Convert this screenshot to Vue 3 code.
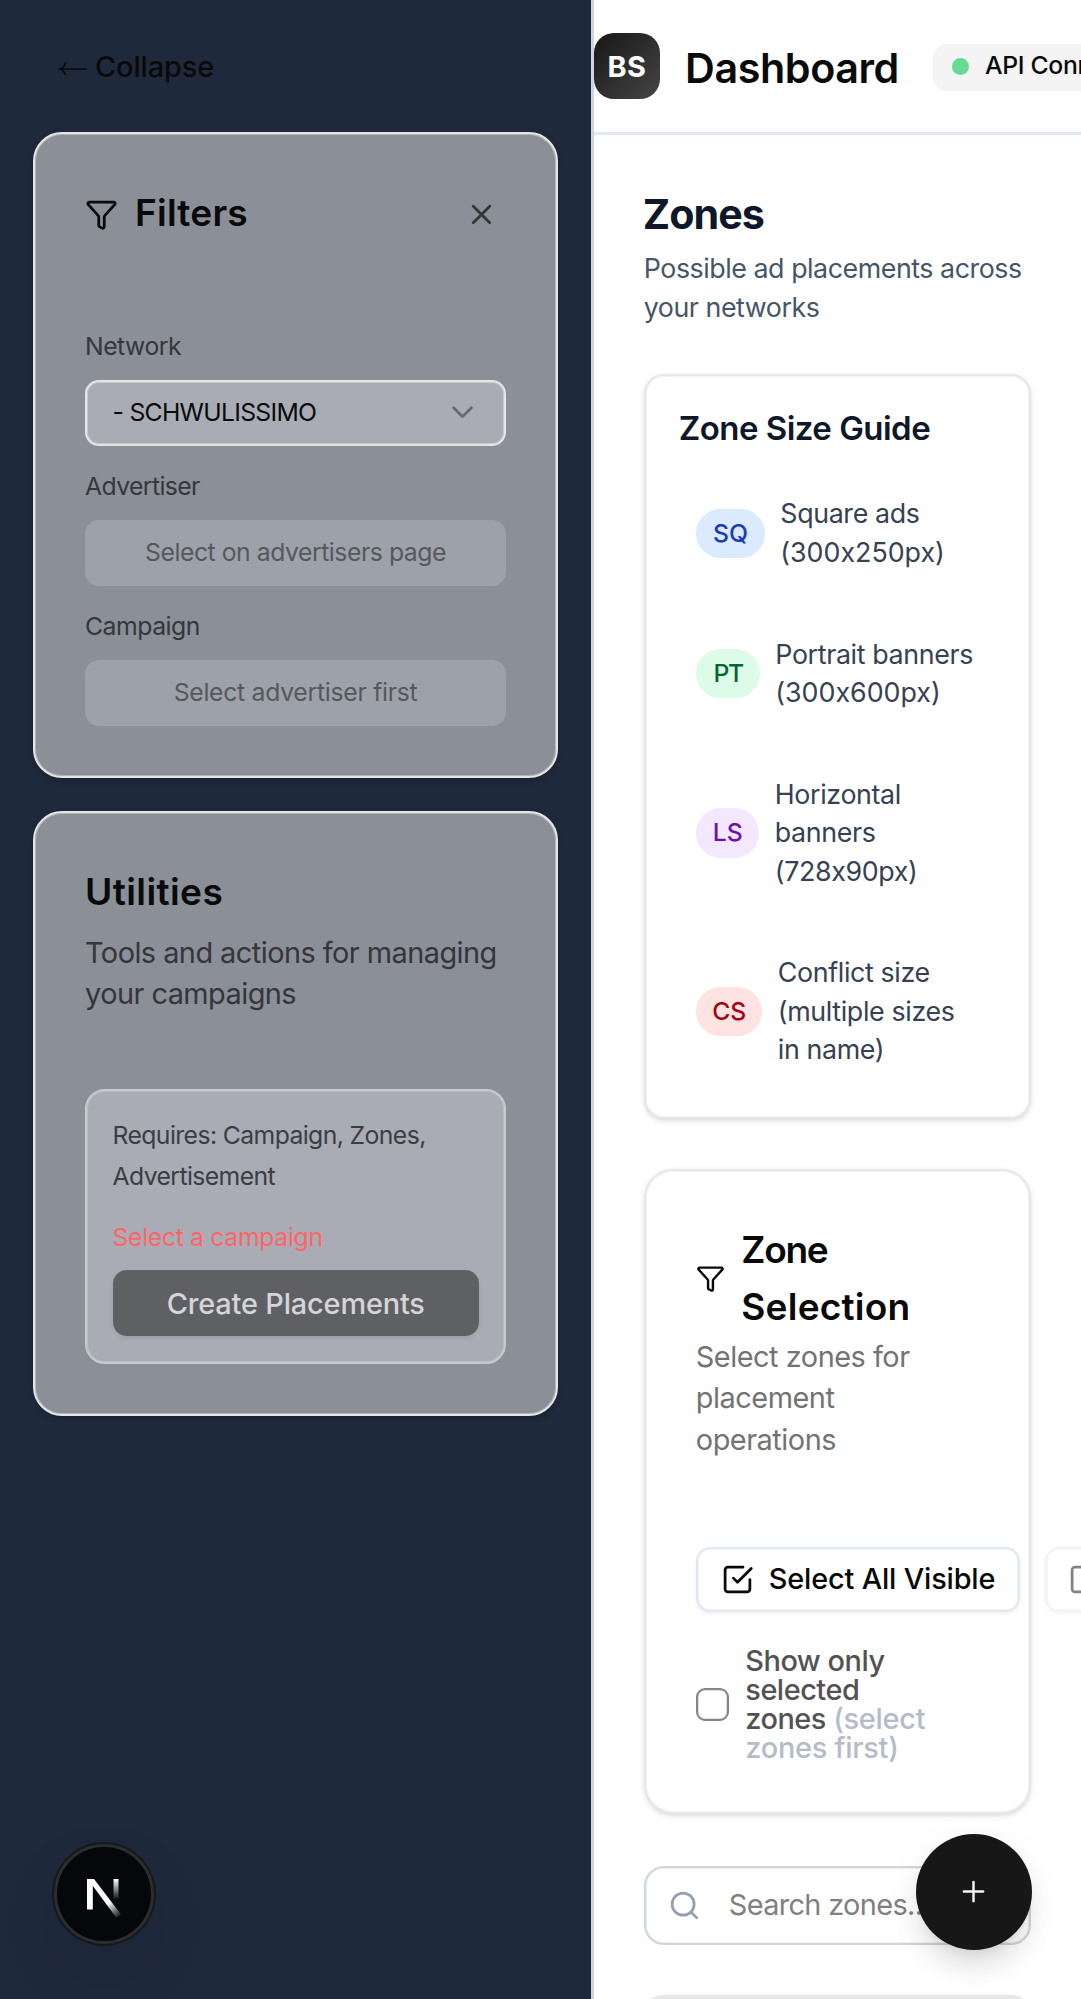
<script setup>
const sizes = [
  { code: 'SQ', tone: 'blue', width: 68.5, lines: ['Square ads', '(300x250px)'] },
  { code: 'PT', tone: 'green', width: 63.5, lines: ['Portrait banners', '(300x600px)'] },
  { code: 'LS', tone: 'purple', width: 63, lines: ['Horizontal', 'banners', '(728x90px)'] },
  { code: 'CS', tone: 'red', width: 66, lines: ['Conflict size', '(multiple sizes', 'in name)'] }
]
</script>

<template>
  <div class="app">
    <aside class="sidebar">
      <button class="collapse">
        <svg width="30" height="14" viewBox="0 0 30 14" fill="none" stroke="currentColor" stroke-width="1.7"><path d="M28 7H1.5M7.500 1.200C6.500 4 4.500 6.400 1.500 7c3 .6 5 3 6 5.800" /></svg>
        <span>Collapse</span>
      </button>

      <section class="panel filters">
        <div class="panel-head">
          <svg class="funnel" width="33" height="33" viewBox="0 0 24 24"><path d="M10 20a1 1 0 0 0 .553.895l2 1A1 1 0 0 0 14 21v-7a2 2 0 0 1 .517-1.341L21.740 4.670A1 1 0 0 0 21 3H3a1 1 0 0 0-.742 1.670l7.225 7.989A2 2 0 0 1 10 14z" /></svg>
          <h2>Filters</h2>
          <svg class="close" width="33" height="33" viewBox="0 0 24 24"><path d="M18 6 6 18M6 6l12 12" /></svg>
        </div>
        <label class="flabel">Network</label>
        <div class="select">
          <span>- SCHWULISSIMO</span>
          <svg width="33" height="33" viewBox="0 0 24 24"><path d="m5.500 8.500 6.500 6.500 6.500-6.500" /></svg>
        </div>
        <label class="flabel adv">Advertiser</label>
        <div class="field">Select on advertisers page</div>
        <label class="flabel">Campaign</label>
        <div class="field late">Select advertiser first</div>
      </section>

      <section class="panel utilities">
        <h2>Utilities</h2>
        <p class="lead">Tools and actions for managing<br />your campaigns</p>
        <div class="tool">
          <p class="req">Requires: Campaign, Zones,<br />Advertisement</p>
          <p class="warn">Select a campaign</p>
          <button class="create">Create Placements</button>
        </div>
      </section>

      <div class="devtools">
        <svg width="104" height="104" viewBox="0 0 104 104">
          <defs>
            <linearGradient id="stem" x1="0" y1="37" x2="0" y2="58" gradientUnits="userSpaceOnUse"><stop offset="0" stop-color="#fff" /><stop offset="1" stop-color="#fff" stop-opacity="0" /></linearGradient>
            <linearGradient id="diag" x1="56" y1="61" x2="67" y2="76" gradientUnits="userSpaceOnUse"><stop offset="0" stop-color="#fff" /><stop offset="1" stop-color="#fff" stop-opacity="0" /></linearGradient>
          </defs>
          <circle cx="52" cy="52" r="52" fill="#17181a" />
          <circle cx="52" cy="52" r="48.500" fill="#05070a" stroke="#2b2d30" stroke-width="3" />
          <path d="M35 37h5.800v30.500H35z" fill="#fff" />
          <path d="M61.500 37h5v21h-5z" fill="url(#stem)" />
          <path d="M35 37h7l27 35.500-4.500 3.500L38 40z" fill="url(#diag)" />
        </svg>
      </div>
    </aside>

    <main class="main">
      <header class="topbar">
        <div class="logo">BS</div>
        <h1>Dashboard</h1>
        <div class="status"><i></i><span>API Connected</span></div>
      </header>

      <div class="content">
        <h2 class="title">Zones</h2>
        <p class="subtitle">Possible ad placements across<br />your networks</p>

        <section class="card guide">
          <h3>Zone Size Guide</h3>
          <div class="rows">
            <div v-for="s in sizes" :key="s.code" class="row">
              <span class="pill" :class="s.tone" :style="{ width: s.width + 'px' }">{{ s.code }}</span>
              <div class="desc"><div v-for="l in s.lines" :key="l" :class="{ dims: l.startsWith('(300') }">{{ l }}</div></div>
            </div>
          </div>
        </section>

        <section class="card selection">
          <div class="sel-head">
            <svg class="funnel" width="29" height="29" viewBox="0 0 24 24"><path d="M10 20a1 1 0 0 0 .553.895l2 1A1 1 0 0 0 14 21v-7a2 2 0 0 1 .517-1.341L21.740 4.670A1 1 0 0 0 21 3H3a1 1 0 0 0-.742 1.670l7.225 7.989A2 2 0 0 1 10 14z" /></svg>
            <h3><span class="zone">Zone</span><br />Selection</h3>
          </div>
          <p class="sel-text">Select zones for<br />placement<br />operations</p>
          <div class="actions">
            <button class="btn">
              <svg width="33" height="33" viewBox="0 0 24 24"><path d="m9 11 3 3L22 4" /><path d="M21 12v7a2 2 0 0 1-2 2H5a2 2 0 0 1-2-2V5a2 2 0 0 1 2-2h11" /></svg>
              <span>Select All Visible</span>
            </button>
            <button class="btn off">
              <svg width="33" height="33" viewBox="0 0 24 24"><rect x="3" y="3" width="18" height="18" rx="2" /></svg>
            </button>
          </div>
          <div class="check">
            <i></i>
            <p>Show only<br />selected<br />zones <span>(select<br />zones first)</span></p>
          </div>
        </section>

        <div class="search">
          <svg width="33" height="33" viewBox="0 0 24 24"><circle cx="11" cy="11" r="8" /><path d="m21 21-4.300-4.300" /></svg>
          <span>Search zones...</span>
        </div>
        <div class="card next"></div>
      </div>
    </main>

    <button class="fab">
      <svg width="33" height="33" viewBox="0 0 24 24"><path d="M5 12h14M12 5v14" /></svg>
    </button>
  </div>
</template>

<style>
html, body { margin: 0; overflow: hidden; }
</style>

<style scoped>
* { box-sizing: border-box; margin: 0; }
.app {
  position: relative;
  display: flex;
  width: 1081px;
  height: 1999px;
  overflow: hidden;
  background: #fff;
  font-family: Inter, "Liberation Sans", sans-serif;
  font-feature-settings: "calt" 0;
  color: #0a0a0a;
  white-space: nowrap;
}
button { font: inherit; letter-spacing: inherit; color: inherit; border: 0; background: none; padding: 0; }
svg { display: block; flex: none; overflow: visible; }
svg path, svg rect, svg circle { stroke-linecap: round; stroke-linejoin: round; }

.sidebar {
  position: relative;
  flex: none;
  width: 594px;
  height: 1999px;
  padding: 46px 33px 0 33px;
  background: #1e293b;
  border-right: 3px solid #d1d3d8;
}
.collapse {
  display: flex;
  align-items: center;
  height: 41px;
  margin-left: 25px;
  gap: 7px;
  font-size: 28.900px;
  font-weight: 500;
  line-height: 41px;
  letter-spacing: -.1px;
}
.collapse svg { margin-top: 5px; }
.panel {
  background: #8b8f97;
  border: 2px solid #e5e5e5;
  border-radius: 29px;
  padding: 50px 50px 0;
  box-shadow: 0 2px 6px rgba(0, 0, 0, .2), inset 0 0 0 1px rgba(229, 229, 229, .45);
}
.panel h2 { font-size: 37.100px; line-height: 57px; font-weight: 600; letter-spacing: .2px; }
.filters { height: 646px; margin-top: 45px; }
.utilities { height: 605px; margin-top: 33px; }
.panel-head { display: flex; align-items: center; margin-bottom: 84.500px; }
.panel-head h2 { margin-left: 17px; flex: 1; }
.funnel { fill: none; stroke: #0a0a0a; stroke-width: 2; }
.panel-head .funnel { margin-top: 3px; }
.close { margin: 3px 8px 0 0; fill: none; stroke: #333537; stroke-width: 2; }
.flabel { display: block; font-size: 24.750px; line-height: 41px; color: #34373b; letter-spacing: -.48px; }
.flabel.adv { letter-spacing: -.6px; }
.select, .field { height: 66px; margin: 13px 0 20.200px; border-radius: 14px; font-size: 24.750px; line-height: 41px; }
.select {
  display: flex;
  align-items: center;
  justify-content: space-between;
  padding: 0 25px 0 25.500px;
  border: 2px solid #e5e5e5;
  background: #a9acb4;
  letter-spacing: -.72px;
  box-shadow: inset 0 0 0 1px rgba(229, 229, 229, .5);
}
.select svg { fill: none; stroke: #67696d; stroke-width: 2; }
.field { display: flex; align-items: center; justify-content: center; background: #9da1a9; color: #56585c; letter-spacing: -.46px; }
.field.late { letter-spacing: -.28px; }
.utilities h2 { letter-spacing: .4px; }
.lead { margin-top: 11.500px; font-size: 28.900px; line-height: 41.250px; letter-spacing: -.54px; color: #34363b; }
.tool {
  height: 275px;
  margin-top: 75px;
  padding: 23.500px 25px 0 25.500px;
  border: 2px solid #c7cacd;
  border-radius: 20px;
  background: #a9acb4;
  box-shadow: inset 0 0 0 1px rgba(199, 202, 205, .5);
}
.req, .warn { font-size: 24.750px; line-height: 41px; letter-spacing: -.6px; color: #3b3d42; }
.warn { margin-top: 20.500px; letter-spacing: -.33px; color: #ff6467; }
.create {
  display: block;
  width: 100%;
  height: 66px;
  margin-top: 12px;
  padding-top: 1px;
  border-radius: 14px;
  background: #5f6064;
  color: #d4d5d7;
  font-size: 28.900px;
  font-weight: 500;
  letter-spacing: -.16px;
  box-shadow: 0 2px 4px rgba(0, 0, 0, .08);
}
.devtools { position: absolute; left: 52px; top: 1842px; border-radius: 50%; box-shadow: 0 30px 60px rgba(10, 15, 30, .1); }

.main { flex: 1; min-width: 0; height: 1999px; overflow: hidden; }
.topbar { display: flex; height: 135px; border-bottom: 3px solid #e2e8f0; }
.logo {
  flex: none;
  width: 66px;
  height: 66px;
  margin-top: 33px;
  border-radius: 20px;
  background: linear-gradient(135deg, #171717, #454545);
  color: #fafafa;
  font-size: 28.900px;
  font-weight: 700;
  line-height: 67px;
  text-align: center;
  letter-spacing: .6px;
}
h1 { margin: 43px 0 0 25px; font-size: 41.250px; font-weight: 600; line-height: 50px; letter-spacing: -.4px; }
.status { display: flex; align-items: center; flex: none; height: 46.500px; margin: 44px 0 0 34px; padding: 0 19px; border-radius: 14px; background: #f4f4f4; font-size: 24.750px; font-weight: 500; line-height: 41px; letter-spacing: -.3px; }
.status i { width: 17px; height: 17px; margin: -1px 16px 0 0; border-radius: 50%; background: #65dc92; }
.status span { margin-top: -3px; }
.content { width: 437px; padding: 54px 0 0 49.800px; }
.title { font-size: 41.250px; line-height: 50px; font-weight: 700; color: #0f172a; letter-spacing: -.99px; margin-left: -1px; }
.subtitle { margin-top: 9.800px; font-size: 26.800px; line-height: 38.870px; color: #475569; letter-spacing: -.46px; }
.card {
  width: 387.500px;
  border: 2px solid #e5e7eb;
  background: #fff;
  box-shadow: 0 2px 6px rgba(0, 0, 0, .1), 0 2px 4px -2px rgba(0, 0, 0, .1), inset 0 0 0 1px rgba(229, 231, 235, .5);
}
.guide { height: 744.500px; margin-top: 47.500px; padding: 26.500px 0 0 33px; border-radius: 20px; }
.guide h3 { font-size: 33px; line-height: 50px; font-weight: 600; color: #0f172a; letter-spacing: -.53px; }
.rows { display: flex; flex-direction: column; gap: 64.400px; margin: 42.800px 0 0 17.500px; }
.row { display: flex; align-items: center; gap: 15.500px; }
.pill { flex: none; height: 49.500px; border-radius: 24.750px; font-size: 24.750px; font-weight: 500; line-height: 49.500px; text-align: center; }
.blue { background: #dbeafe; color: #193cb8; }
.green { background: #dcfce7; color: #016630; letter-spacing: -1.400px; }
.purple { background: #f3e8ff; color: #6e11b0; }
.red { background: #ffe2e2; color: #9f0712; }
.desc { margin-top: -1px; font-size: 26.800px; line-height: 38.400px; letter-spacing: -.36px; color: #364153; }
.dims { letter-spacing: 0; }
.selection { height: 645.500px; margin-top: 50px; padding: 50px 0 0 50px; border-radius: 29px; }
.sel-head { display: flex; align-items: center; gap: 16.500px; }
.sel-head .funnel { margin-top: 2px; }
.sel-head h3 { font-size: 37.100px; line-height: 57px; font-weight: 600; letter-spacing: .2px; }
.zone { letter-spacing: -1.300px; }
.sel-text { margin-top: 1px; font-size: 28.900px; line-height: 41.600px; letter-spacing: -.48px; color: #737373; }
.actions { display: flex; gap: 25px; margin-top: 87px; }
.btn {
  display: flex;
  align-items: center;
  flex: none;
  width: 324px;
  height: 65px;
  padding-left: 23px;
  gap: 15px;
  border: 2px solid #e2e8f0;
  border-radius: 14px;
  background: #fff;
  font-size: 28.900px;
  font-weight: 500;
  letter-spacing: -.17px;
  box-shadow: 0 2px 4px rgba(0, 0, 0, .06), inset 0 0 0 1px rgba(226, 232, 240, .5);
}
.btn span { margin-top: -2px; }
.btn svg { fill: none; stroke: currentColor; stroke-width: 2; }
.off { opacity: .5; }
.off svg { margin-left: -2px; }
.check { display: flex; align-items: center; gap: 16.500px; margin-top: 33.500px; }
.check i { flex: none; width: 33px; height: 33px; border: 2px solid #858585; border-radius: 9px; box-shadow: inset 0 0 0 1px rgba(133, 133, 133, .25); }
.check p { padding-top: 1px; font-size: 28.900px; line-height: 28.900px; font-weight: 500; color: #535353; letter-spacing: -.48px; }
.check span { color: #b5bbc8; letter-spacing: -.25px; }
.search {
  display: flex;
  align-items: center;
  width: 387.500px;
  height: 79.500px;
  margin-top: 51.500px;
  padding-left: 22.500px;
  border: 2px solid #d1d5dc;
  border-radius: 20px;
  font-size: 28.900px;
  color: #808080;
  letter-spacing: -.65px;
  box-shadow: inset 0 0 0 1px rgba(209, 213, 220, .4);
}
.search svg { margin-right: 27.500px; fill: none; stroke: #94a0b2; stroke-width: 2; }
.search span { margin-top: -1.500px; }
.next { height: 120px; margin-top: 49.500px; border-radius: 20px; background: #e5e7eb; }
.fab {
  position: absolute;
  left: 915.500px;
  top: 1833.500px;
  width: 116px;
  height: 116px;
  display: flex;
  align-items: center;
  justify-content: center;
  border-radius: 50%;
  background: #171717;
  box-shadow: 0 20px 31px -6px rgba(0, 0, 0, .12), 0 8px 12px -8px rgba(0, 0, 0, .1), 0 8px 40px rgba(0, 0, 0, .05);
}
.fab svg { fill: none; stroke: #f5f5f5; stroke-width: 1.800; }
</style>
